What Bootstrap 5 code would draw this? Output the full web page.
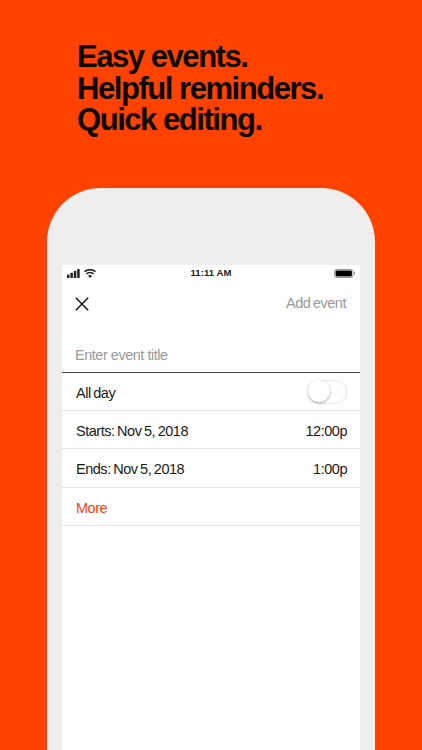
<!DOCTYPE html>
<html lang="en"><head><meta charset="utf-8">
<link href="https://cdn.jsdelivr.net/npm/bootstrap@5.3.0/dist/css/bootstrap.min.css" rel="stylesheet">
<style>
html,body{height:750px;overflow:hidden}
body{background:#ff4200;font-family:"Liberation Sans",Arial,sans-serif;color:#1a1a1a}
.stage{height:750px;overflow:hidden}
.headline{padding:41px 0 0 77px;height:188px;margin:0;font-size:31px;line-height:31.5px;font-weight:700;letter-spacing:-1.45px;color:#0c0704}
.phone{margin:0 47px;width:328px;height:562px;background:#eee;border-radius:54px 54px 0 0;padding:77px 15px 0}
.screen{background:#fff;height:485px;font-size:14.5px;letter-spacing:-.48px;word-spacing:-1px}
.statusbar{height:17px;padding:0 5px;font-size:9.5px;font-weight:700;letter-spacing:.1px;word-spacing:0;color:#222}
.statusbar>*{flex:1 1 0}
.topbar{height:44px;padding:0 14px 0 13px}
.addevt{color:#999}
.titlerow{height:47px;padding:0 14px 5px 13px;border-bottom:1px solid #444;color:#999;word-spacing:0}
.rowline{height:38px;padding:4px 13px 0 14px;border-bottom:1px solid #e6e6e6}
.rowtall{height:39px}
.orange{color:#f0441a}
.switcher{width:39px;height:24px;margin-top:-4px;border-radius:12px;border:1px solid #e6e6e6;background:#fff;position:relative}
.switcher::before{content:"";position:absolute;left:-1px;top:-1px;width:22px;height:22px;border-radius:50%;background:#fff;box-shadow:0 1px 3px rgba(0,0,0,.35)}
</style></head><body>
<div class="stage">
<h1 class="headline">Easy events.<br>Helpful reminders.<br>Quick editing.</h1>
<div class="phone"><div class="screen">
<div class="statusbar d-flex align-items-center">
<div class="d-flex align-items-center gap-1">
<svg width="13" height="9" viewBox="0 0 13 9"><rect x="0" y="5.5" width="2.5" height="3.5" rx=".6" fill="#222"/><rect x="3.4" y="3.8" width="2.5" height="5.2" rx=".6" fill="#222"/><rect x="6.8" y="1.8" width="2.5" height="7.2" rx=".6" fill="#222"/><rect x="10.2" y="0" width="2.5" height="9" rx=".6" fill="#222"/></svg>
<svg width="12" height="9" viewBox="0 0 12 9"><path d="M6 9 4 6.7a3.2 3.2 0 0 1 4 0zM3 5.6 1.8 4.2a6.4 6.4 0 0 1 8.4 0L9 5.6a4.6 4.6 0 0 0-6 0zM1 3.3 0 2.1a9.2 9.2 0 0 1 12 0l-1 1.2a7.6 7.6 0 0 0-10 0z" fill="#222"/></svg>
</div>
<div class="text-center">11:11 AM</div>
<div class="d-flex justify-content-end">
<svg width="21" height="9" viewBox="0 0 21 9"><rect x=".5" y=".5" width="18.5" height="8" rx="2" fill="none" stroke="#999"/><rect x="1.600" y="1.600" width="16.3" height="5.8" rx="1" fill="#000"/><rect x="19.8" y="3" width="1.2" height="3" fill="#999"/></svg>
</div></div>
<div class="topbar d-flex align-items-center justify-content-between">
<svg width="14" height="14" viewBox="0 0 14 14"><path d="M.8.8l12.4 12.4M13.200.8.8 13.200" stroke="#111" stroke-width="1.4" fill="none"/></svg>
<span class="addevt">Add event</span></div>
<div class="titlerow d-flex align-items-end">Enter event title</div>
<div class="rowline d-flex align-items-center justify-content-between"><span>All day</span><span class="switcher"></span></div>
<div class="rowline d-flex align-items-center justify-content-between"><span>Starts: Nov 5, 2018</span><span>12:00p</span></div>
<div class="rowline rowtall d-flex align-items-center justify-content-between"><span>Ends: Nov 5, 2018</span><span>1:00p</span></div>
<div class="rowline d-flex align-items-center orange">More</div>
</div></div>
</div>
</body></html>
